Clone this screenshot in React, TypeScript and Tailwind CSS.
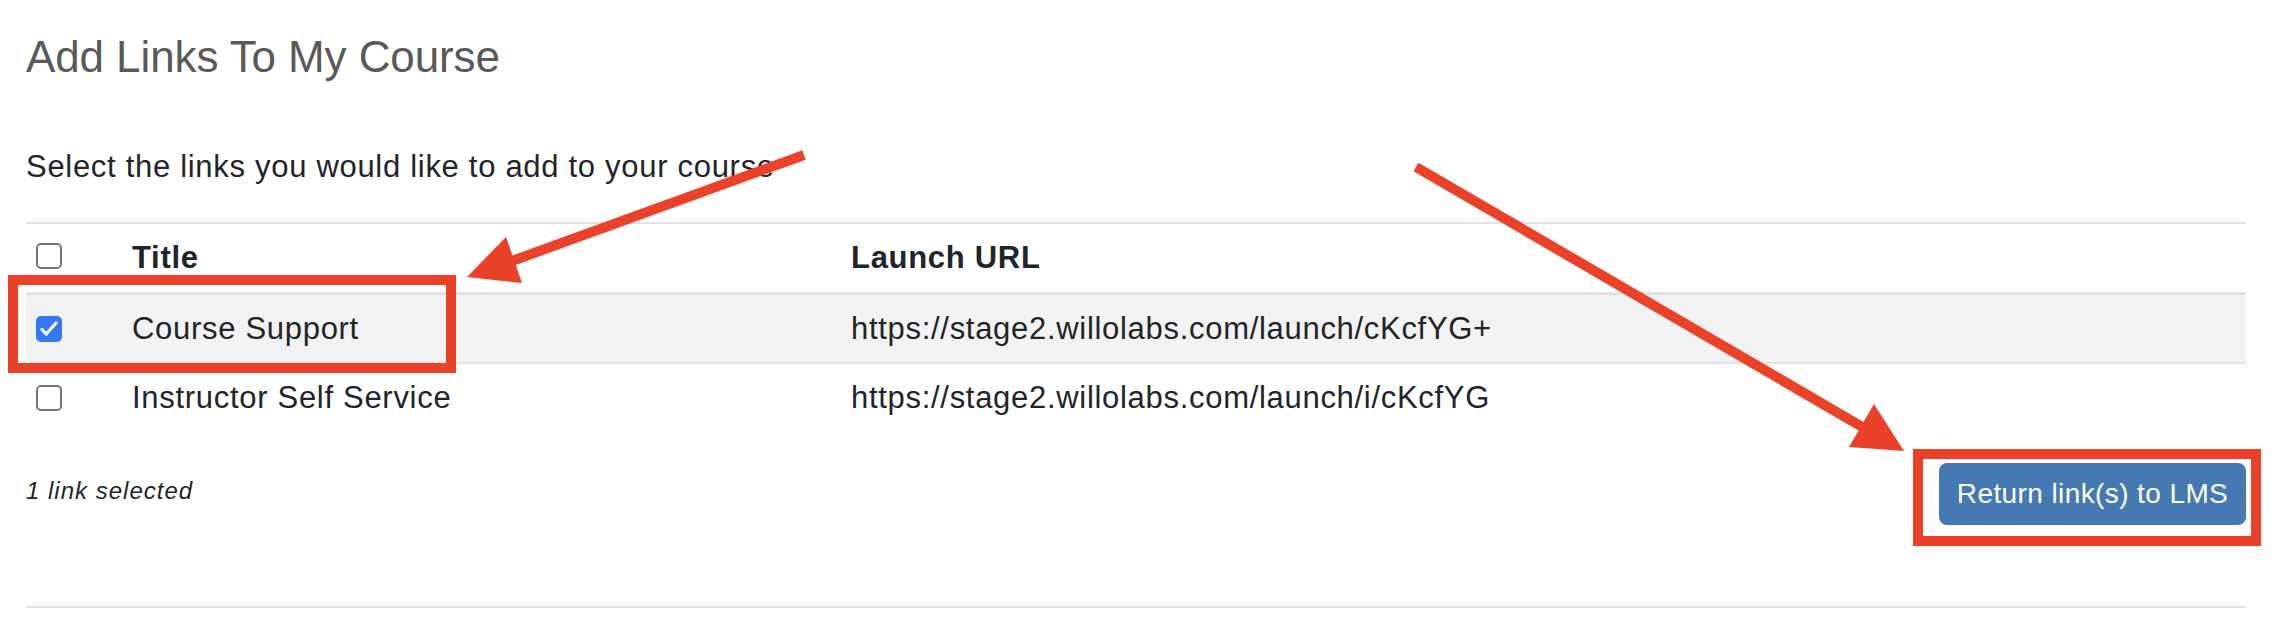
import React from "react";

const links = [
  {
    title: "Course Support",
    url: "https://stage2.willolabs.com/launch/cKcfYG+",
    checked: true,
  },
  {
    title: "Instructor Self Service",
    url: "https://stage2.willolabs.com/launch/i/cKcfYG",
    checked: false,
  },
];

function CheckBox({ checked }: { checked?: boolean }) {
  if (checked) {
    return (
      <span className="flex h-[26px] w-[26px] items-center justify-center rounded-[5px] bg-[#3478f6]">
        <svg width="26" height="26" viewBox="0 0 26 26">
          <path
            d="M6 13.5l4.2 4.5L20 7"
            fill="none"
            stroke="white"
            strokeWidth="3.2"
            strokeLinecap="round"
            strokeLinejoin="round"
          />
        </svg>
      </span>
    );
  }
  return (
    <span className="block h-[26px] w-[26px] rounded-[5px] border-2 border-[#767676] bg-white" />
  );
}

export default function App() {
  return (
    <div className="relative h-[622px] w-[2286px] overflow-hidden bg-white font-['Liberation_Sans',Arial,sans-serif] text-[#212529]">
      <div className="ml-[26px] w-[2220px] pt-[31px]">
        <h1 className="text-[44px] leading-[52px] tracking-[-0.1px] text-[#595959]">
          Add Links To My Course
        </h1>
        <p className="mt-[66px] text-[31px] leading-[36px] tracking-[0.7px]">
          Select the links you would like to add to your course
        </p>

        {/* links table */}
        <div className="mt-[37px] border-t-2 border-[#dee2e6] text-[31px] leading-[36px] tracking-[0.7px]">
          <div className="flex h-[71px] items-center border-b-[3px] border-[#dee2e6] font-bold">
            <div className="flex w-[106px] pl-[10px]">
              <span className="mb-[5px]">
                <CheckBox />
              </span>
            </div>
            <div className="w-[719px]">Title</div>
            <div className="flex-1">Launch URL</div>
          </div>
          {links.map((link, i) => (
            <div
              key={link.url}
              className={
                i === 0
                  ? "flex h-[69px] items-center border-b-2 border-[#dee2e6] bg-[#f2f2f2]"
                  : "flex h-[67px] items-center"
              }
            >
              <div className="flex w-[106px] pl-[10px]">
                <CheckBox checked={link.checked} />
              </div>
              <div className="w-[719px]">{link.title}</div>
              <div className="flex-1">{link.url}</div>
            </div>
          ))}
        </div>

        <div className="mt-[32px] flex items-start justify-between">
          <p className="mt-[13px] text-[24px] italic leading-[30px] tracking-[1px]">
            1 link selected
          </p>
          <button className="h-[62px] w-[307px] rounded-[8px] bg-[#4679b2] text-[28px] tracking-[0.4px] text-white">
            Return link(s) to LMS
          </button>
        </div>

        <div className="mt-[81px] h-[2px] bg-[#e3e3e3]" />
      </div>

      {/* annotation boxes */}
      <div className="absolute left-[8px] top-[275px] h-[98px] w-[448px] border-[10px] border-[#ea4129]" />
      <div className="absolute left-[1913px] top-[449px] h-[97px] w-[348px] border-[10px] border-[#ea4129]" />

      {/* annotation arrows */}
      <svg
        className="pointer-events-none absolute left-0 top-0"
        width="2286"
        height="622"
        viewBox="0 0 2286 622"
      >
        <line x1="804" y1="155" x2="512" y2="261" stroke="#ea4129" strokeWidth="10" />
        <polygon points="467,277 506,237 522,283" fill="#ea4129" />
        <line x1="1416" y1="167" x2="1864" y2="428" stroke="#ea4129" strokeWidth="10" />
        <polygon points="1904,451 1874,404 1849,447" fill="#ea4129" />
      </svg>
    </div>
  );
}
